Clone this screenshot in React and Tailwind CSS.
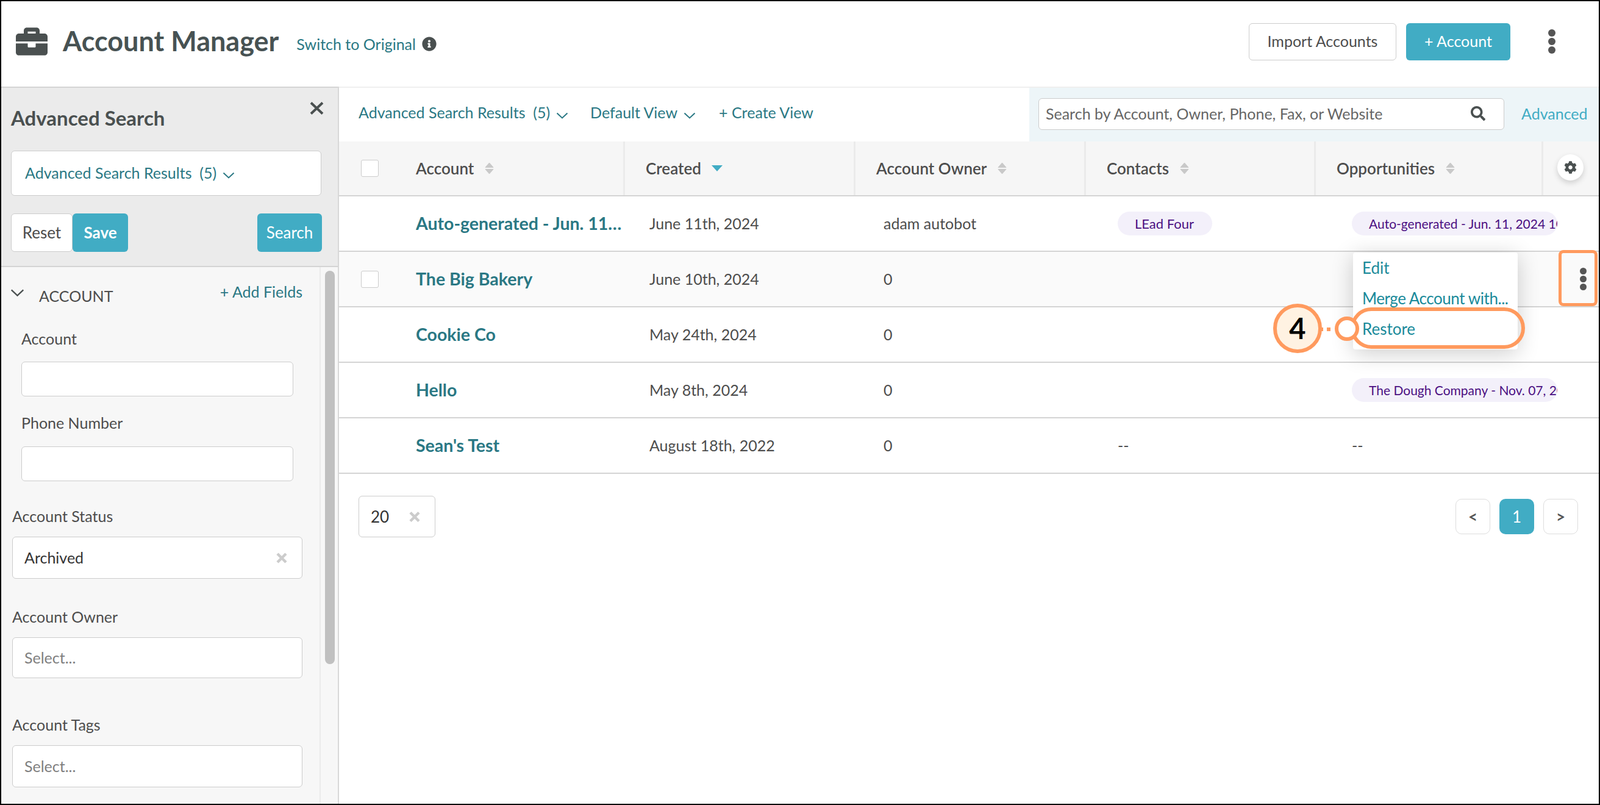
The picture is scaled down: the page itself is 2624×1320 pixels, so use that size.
import React from 'react';
import { FaBriefcase, FaInfoCircle, FaSearch, FaCog } from 'react-icons/fa';

const rows = [
    { name: 'Auto-generated - Jun. 11, 2024 10:00 AM', date: 'June 11th, 2024', owner: 'adam autobot', contact: 'LEad Four', opp: 'Auto-generated - Jun. 11, 2024 10:00 AM' },
    { name: 'The Big Bakery', date: 'June 10th, 2024', owner: '0', check: true, hover: true },
    { name: 'Cookie Co', date: 'May 24th, 2024', owner: '0' },
    { name: 'Hello', date: 'May 8th, 2024', owner: '0', opp: 'The Dough Company - Nov. 07, 2023 10:00 AM' },
    { name: "Sean's Test", date: 'August 18th, 2022', owner: '0', contactText: '--', oppText: '--' },
];

const Chevron = ({ className }) => (
    <svg viewBox="0 0 20 11" fill="none" stroke="currentColor" strokeWidth="2" className={className}>
        <path d="M1.5 1.5 L10 9.5 L18.5 1.5" />
    </svg>
);

const XMark = ({ className }) => (
    <svg viewBox="0 0 18 18" fill="none" stroke="currentColor" strokeWidth="4.5" className={className}>
        <path d="M2 2 L16 16 M16 2 L2 16" />
    </svg>
);

const Sort = () => (
    <svg viewBox="0 0 15 20" className="w-[15px] h-[20px] ml-[18px] text-[#c9c9c9]" fill="currentColor" stroke="currentColor" strokeLinejoin="round">
        <path d="M7.5 1 L14 8.5 H1 Z" />
        <path d="M1 11.5 H14 L7.5 19 Z" />
    </svg>
);

const Kebab = ({ className }) => (
    <div className={className}>
        <div className="rounded-full bg-[#555] w-full aspect-square" />
        <div className="rounded-full bg-[#555] w-full aspect-square" />
        <div className="rounded-full bg-[#555] w-full aspect-square" />
    </div>
);

const Checkbox = () => <div className="w-[29px] h-[28px] ml-[36px] rounded-[3px] border border-[#ccc] bg-white" />;

const HeadCell = ({ label, first, active }) => (
    <div className={`flex items-center border-r-[3px] border-[#ebebeb] text-[26px] font-semibold text-[#4d4d4d] ${first ? '' : 'pl-[34px]'}`}>
        {first && <Checkbox />}
        <span className={first ? 'ml-[61px]' : ''}>{label}</span>
        {active ? (
            <svg viewBox="0 0 18 10" className="w-[18px] h-[10px] ml-[17px] text-[#41acc4]" fill="currentColor">
                <path d="M0 0 H18 L9 10 Z" />
            </svg>
        ) : <Sort />}
    </div>
);

const Pill = ({ text, long }) => (
    <div className={`h-[39px] pl-[28px] flex items-center rounded-full bg-[#f3f0fa] text-[#4b0f82] overflow-hidden ${long ? 'w-[337px] text-[21px]' : 'w-max pr-[30px] text-[22px]'}`}>
        <span className="whitespace-nowrap">{text}</span>
    </div>
);

const Field = ({ label, className, children }) => (
    <div className={className}>
        <div className="text-[25px] leading-[32px] text-[#4d4d4d] whitespace-nowrap">{label}</div>
        {children}
    </div>
);

const SelectBox = ({ className, children }) => (
    <div className={`w-[476px] flex items-center justify-between pl-[19px] pr-[24px] bg-white border border-[#ccc] rounded-[6px] text-[25px] ${className}`}>
        {children}
    </div>
);

export default function App() {
    return (
        <div className="relative w-[2624px] h-[1320px] border-2 border-black bg-white overflow-hidden [font-family:Lato,sans-serif]">
            {/* top bar */}
            <div className="h-[140px] flex items-center pl-[24px] pr-[71px] pb-[8px]">
                <FaBriefcase className="w-[52px] h-[52px] text-[#4a5050]" />
                <h1 className="ml-[25px] text-[45px] font-bold text-[#475253]">Account Manager</h1>
                <a className="ml-[29px] mt-[10px] text-[25px] text-[#2a7884]">Switch to Original</a>
                <FaInfoCircle className="ml-[10px] mt-[8px] w-[24px] h-[24px] text-[#4a5050]" />
                <div className="ml-auto flex items-center">
                    <button className="w-[242px] h-[61px] rounded-[6px] border border-[#ccc] bg-white text-[25px] text-[#4d4d4d]">Import Accounts</button>
                    <button className="w-[171px] h-[61px] ml-[16px] rounded-[6px] bg-[#41acc4] text-[25px] text-white">+ Account</button>
                    <Kebab className="ml-[62px] w-[12px] flex flex-col gap-[2px]" />
                </div>
            </div>

            <div className="flex h-[1176px]">
                {/* left panel */}
                <aside className="w-[554px] shrink-0 border-r-2 border-[#d8d8d8] flex flex-col">
                    <div className="relative h-[296px] shrink-0 bg-[#ebebeb] border-y-2 border-[#d4d4d4] px-[16px]">
                        <h2 className="mt-[28px] text-[33px] leading-[42px] font-bold text-[#4a5050]">Advanced Search</h2>
                        <svg viewBox="0 0 23 21" className="absolute left-[506px] top-[23px] w-[23px] h-[21px] text-[#4a5050]" fill="none" stroke="currentColor" strokeWidth="4">
                            <path d="M2 1.5 L21 19.5 M21 1.5 L2 19.5" />
                        </svg>
                        <div className="mt-[33px] w-[509px] h-[74px] flex items-center pl-[22px] rounded-[6px] border border-[#ccc] bg-white text-[25px] text-[#2a7884]">
                            Advanced Search Results&nbsp;&nbsp;(5)
                            <Chevron className="ml-[10px] mt-[6px] w-[20px] h-[11px]" />
                        </div>
                        <div className="mt-[29px] flex w-[510px]">
                            <button className="w-[101px] h-[63px] rounded-[6px] border border-[#ccc] bg-white text-[26px] text-[#4d4d4d]">Reset</button>
                            <button className="w-[91px] h-[63px] rounded-[6px] bg-[#41acc4] text-[26px] font-bold text-white">Save</button>
                            <button className="ml-auto w-[106px] h-[63px] rounded-[6px] bg-[#41acc4] text-[26px] text-white">Search</button>
                        </div>
                    </div>

                    <div className="flex-1 flex bg-[#f7f7f7] min-h-0">
                        <div className="w-[524px] shrink-0 border-r-2 border-[#ebebeb] pl-[18px] pt-[23px] overflow-hidden">
                            <div className="h-[38px] flex items-center w-[476px]">
                                <Chevron className="-ml-[3px] w-[23px] h-[14px] text-[#4a5050]" />
                                <span className="ml-[24px] mt-[12px] text-[25px] text-[#4d4d4d]">ACCOUNT</span>
                                <span className="ml-auto -mt-[2px] text-[25px] text-[#2a7884]">+ Add Fields</span>
                            </div>
                            <Field label="Account" className="mt-[40px] ml-[15px]">
                                <div className="mt-[22px] w-[446px] h-[57px] bg-white border border-[#ccc] rounded-[6px]" />
                            </Field>
                            <Field label="Phone Number" className="mt-[27px] ml-[15px]">
                                <div className="mt-[23px] w-[446px] h-[57px] bg-white border border-[#ccc] rounded-[6px]" />
                            </Field>
                            <Field label="Account Status" className="mt-[41px]">
                                <SelectBox className="mt-[18px] h-[69px] text-[#333]">
                                    Archived
                                    <XMark className="w-[18px] h-[18px] text-[#ccc]" />
                                </SelectBox>
                            </Field>
                            <Field label="Account Owner" className="mt-[46px]">
                                <SelectBox className="mt-[18px] h-[67px] text-[#808080]">Select...</SelectBox>
                            </Field>
                            <Field label="Account Tags" className="mt-[60px]">
                                <SelectBox className="mt-[18px] h-[69px] text-[#808080]">Select...</SelectBox>
                            </Field>
                        </div>
                        <div className="flex-1 px-[7px] pt-[6px]">
                            <div className="w-[16px] h-[645px] rounded-full bg-[#c0c0c0]" />
                        </div>
                    </div>
                </aside>

                {/* table side */}
                <main className="flex-1 min-w-0">
                    <div className="flex h-[90px] border-t-2 border-[#efefef]">
                        <div className="flex-1 flex items-center pl-[32px] pb-[6px] text-[25px] text-[#2a7884]">
                            <span>Advanced Search Results&nbsp;&nbsp;(5)</span>
                            <Chevron className="ml-[10px] mt-[8px] w-[20px] h-[11px]" />
                            <span className="ml-[36px]">Default View</span>
                            <Chevron className="ml-[10px] mt-[8px] w-[20px] h-[11px]" />
                            <span className="ml-[38px]">+ Create View</span>
                        </div>
                        <div className="w-[934px] bg-[#edf5f8] flex items-center pl-[15px]">
                            <div className="relative w-[764px] h-[52px] -mt-[3px] flex items-center pl-[11px] bg-white border border-[#ccc] rounded-[6px] text-[25px] text-[#666]">
                                Search by Account, Owner, Phone, Fax, or Website
                                <FaSearch className="absolute left-[708px] top-[12px] w-[24px] h-[24px] text-[#4a5050]" />
                            </div>
                            <span className="ml-[28px] -mt-[2px] text-[25px] text-[#41acc4]">Advanced</span>
                        </div>
                    </div>

                    <div className="relative grid grid-cols-[469px_378px_378px_377px_373px_1fr] h-[90px] bg-[#f6f6f6] border-b-2 border-[#d4d4d4]">
                        <HeadCell label="Account" first />
                        <HeadCell label="Created" active />
                        <HeadCell label="Account Owner" />
                        <HeadCell label="Contacts" />
                        <HeadCell label="Opportunities" />
                        <div className="flex justify-center pt-[21px] pr-[2px]">
                            <div className="w-[43px] h-[43px] rounded-full bg-white shadow-[0_4px_10px_rgba(0,0,0,0.16)] flex items-center justify-center">
                                <FaCog className="w-[21px] h-[21px] text-[#4a5050]" />
                            </div>
                        </div>
                    </div>

                    {rows.map((row) => (
                        <div key={row.name} className={`grid grid-cols-[126px_383px_384px_384px_384px_1fr] items-center h-[91px] border-b-2 border-[#d4d4d4] ${row.hover ? 'bg-[#fafafa]' : 'bg-white'}`}>
                            <div>{row.check && <Checkbox />}</div>
                            <div className="w-[340px] truncate text-[28.5px] font-bold text-[#2a7884]">{row.name}</div>
                            <div className="text-[25px] text-[#4d4d4d]">{row.date}</div>
                            <div className="text-[25px] text-[#4d4d4d]">{row.owner}</div>
                            <div className="text-[25px] text-[#4d4d4d]">
                                {row.contact && <Pill text={row.contact} />}
                                {row.contactText}
                            </div>
                            <div className="text-[25px] text-[#4d4d4d]">
                                {row.opp && <Pill text={row.opp} long />}
                                {row.oppText}
                            </div>
                        </div>
                    ))}

                    <div className="flex justify-between pl-[32px] pr-[34px] pt-[36px]">
                        <div className="w-[126px] h-[68px] flex items-center pl-[19px] gap-[33px] border border-[#ccc] rounded-[6px] text-[26px] text-[#333]">
                            20
                            <XMark className="w-[18px] h-[19px] text-[#ccc]" />
                        </div>
                        <div className="flex gap-[15px] pt-[5px]">
                            <button className="w-[57px] h-[58px] rounded-[10px] border border-[#ddd] text-[26px] font-bold text-[#555]">&lt;</button>
                            <button className="w-[57px] h-[58px] rounded-[10px] bg-[#41acc4] text-[26px] text-white">1</button>
                            <button className="w-[57px] h-[58px] rounded-[10px] border border-[#ddd] text-[26px] font-bold text-[#555]">&gt;</button>
                        </div>
                    </div>
                </main>
            </div>

            {/* row menu */}
            <div className="absolute left-[2217px] top-[412px] w-[270px] h-[159px] bg-white rounded-[4px] shadow-[0_6px_36px_rgba(0,0,0,0.2)] pl-[15px] text-[26px] leading-[50px] text-[#1a8a9a] whitespace-nowrap">
                <div>Edit</div>
                <div className="tracking-[-0.45px]">Merge Account with...</div>
                <div>Restore</div>
            </div>

            {/* callouts */}
            <div className="absolute left-[2554px] top-[408px] w-[64px] h-[92px] rounded-[8px] border-[5px] border-[#ff9a5e] flex items-center justify-end pr-[13px] pt-[2px]">
                <Kebab className="w-[11px] flex flex-col gap-[2px]" />
            </div>
            <div className="absolute left-[2213px] top-[502px] w-[286px] h-[68px] rounded-[34px] border-[6px] border-[#ff9a5e]" />
            <div className="absolute left-[2187px] top-[517px] w-[40px] h-[40px] rounded-full border-[6px] border-[#ff9a5e] bg-white" />
            <div className="absolute left-[2163px] top-[535px] w-[5px] h-[6px] bg-[#ff9a5e]" />
            <div className="absolute left-[2174px] top-[535px] w-[6px] h-[6px] bg-[#ff9a5e]" />
            <div className="absolute left-[2086px] top-[496px] w-[80px] h-[81px] rounded-full border-[6px] border-[#ff9a5e] bg-[#fff2e2] flex items-center justify-center text-[47px] font-bold text-black [font-family:'Liberation_Sans',sans-serif]">
                4
            </div>
        </div>
    );
}
